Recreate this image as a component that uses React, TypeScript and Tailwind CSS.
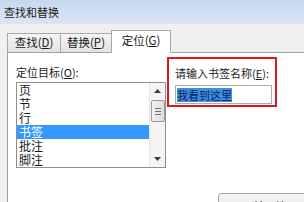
import React from "react";

const items = ["页", "节", "行", "书签", "批注", "脚注"];

function Scrollbar() {
  return (
    <div className="w-[16px] h-full border-l border-[#e6e6e6] bg-[#f4f4f4] flex flex-col items-center">
      {/* up arrow */}
      <div className="h-[16px] w-full flex items-center justify-center">
        <svg width="7" height="4" viewBox="0 0 7 4">
          <path d="M0 4 L3.5 0 L7 4 Z" fill="#3c3c3c" />
        </svg>
      </div>
      {/* thumb */}
      <div className="mt-[1px] w-[14px] h-[22px] rounded-[2px] border border-[#9a9a9a] bg-gradient-to-r from-[#f2f2f2] to-[#dcdcdc] flex flex-col items-center justify-center gap-[2px]">
        <div className="w-[6px] h-px bg-[#6e6e6e]" />
        <div className="w-[6px] h-px bg-[#6e6e6e]" />
        <div className="w-[6px] h-px bg-[#6e6e6e]" />
      </div>
      <div className="flex-1" />
      {/* down arrow */}
      <div className="h-[16px] w-full flex items-center justify-center">
        <svg width="7" height="4" viewBox="0 0 7 4">
          <path d="M0 0 L3.5 4 L7 0 Z" fill="#3c3c3c" />
        </svg>
      </div>
    </div>
  );
}

export default function App() {
  return (
    <div
      className="w-[304px] h-[202px] overflow-hidden bg-[#f0f0f0] text-[#1a1a1a]"
      style={{ fontFamily: '"Noto Sans CJK SC", "Noto Sans", sans-serif' }}
    >
      {/* Title bar */}
      <div className="h-[24px] bg-gradient-to-b from-[#c7d8ee] to-[#dbe6f4] pl-[4px] flex items-center text-[11px] leading-none">
        查找和替换
      </div>

      <div className="pl-[7px] pt-[6px]">
        {/* Tabs */}
        <div className="flex items-end h-[22px] text-[11.5px] leading-none whitespace-nowrap">
          <div className="w-[54px] h-[19px] border border-b-0 border-[#a9a9a9] bg-gradient-to-b from-[#f5f5f5] to-[#e3e3e3] flex items-center justify-center">
            查找(<span className="underline">D</span>)
          </div>
          <div className="-ml-px w-[52px] h-[19px] border border-b-0 border-[#a9a9a9] bg-gradient-to-b from-[#f5f5f5] to-[#e3e3e3] flex items-center justify-center">
            替换(<span className="underline">P</span>)
          </div>
          <div className="relative z-10 -ml-px -mb-px w-[60px] h-[23px] border border-b-0 border-[#a9a9a9] bg-white flex items-center justify-center pb-[2px]">
            定位(<span className="underline">G</span>)
          </div>
        </div>

        {/* Panel */}
        <div className="bg-white border-l border-t border-[#a0a0a0] h-[200px] text-[11px] whitespace-nowrap">
          <div className="flex">
            {/* Left: target list */}
            <div className="w-[159px] pl-[8px] pt-[12px]">
              <div className="leading-[14px] h-[14px]">
                定位目标(<span className="underline">O</span>):
              </div>
              <div className="mt-[3px] w-[150px] h-[86px] border border-[#8c8f96] flex text-[12px]">
                <div className="flex-1 flex flex-col">
                  {items.map((it) => (
                    <div
                      key={it}
                      className={
                        it === "书签"
                          ? "h-[14px] leading-[14px] pl-[2px] bg-[#3399ff] text-white"
                          : "h-[14px] leading-[14px] pl-[2px]"
                      }
                    >
                      {it}
                    </div>
                  ))}
                </div>
                <Scrollbar />
              </div>
            </div>

            {/* Right: bookmark name, highlighted with red box */}
            <div className="mt-[4px] w-[110px] h-[50px] border-2 border-[#e0161e] pl-[6px] pt-[7px]">
              <div className="leading-[14px] h-[14px]">
                请输入书签名称(<span className="underline">E</span>):
              </div>
              <div className="mt-[5px] w-[97px] h-[19px] border border-[#abadb3] flex items-center pl-px">
                <span className="bg-[#3d8fe6] text-[#0b2358] leading-[14px] h-[14px]">我看到这里</span>
              </div>
            </div>
          </div>

          {/* Bottom button, mostly cut off */}
          <div className="mt-[25px] ml-[210px] w-[110px] h-[22px] border border-[#a6a6a6] rounded-[3px] bg-gradient-to-b from-[#f6f6f6] to-[#e2e2e2] pl-[34px] pt-[5px] leading-[14px]">
            前一处(<span className="underline">S</span>)
          </div>
        </div>
      </div>
    </div>
  );
}
